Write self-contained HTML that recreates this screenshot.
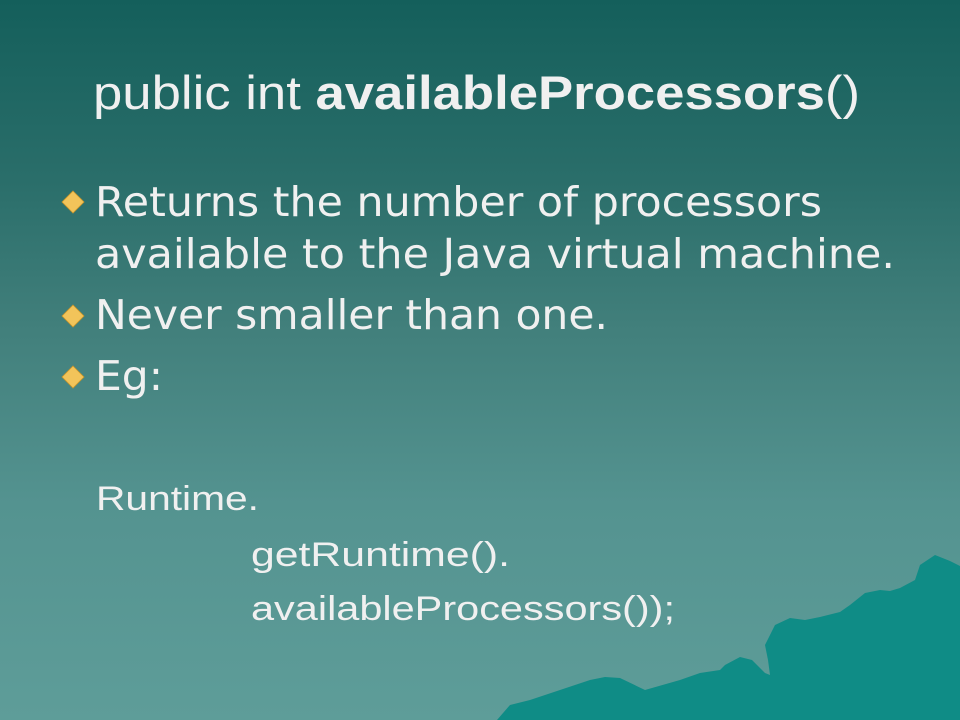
<!DOCTYPE html>
<html><head><meta charset="utf-8"><style>
html,body{margin:0;padding:0;width:960px;height:720px;overflow:hidden}
body{background:linear-gradient(180deg,#145f5b 0%,#2a6e6a 25%,#417f7b 45%,#549390 70%,#5e9d99 100%)}
svg{position:absolute;left:0;top:0}
</style></head><body>
<svg width="960" height="720" viewBox="0 0 960 720">
<polygon fill="#0f8c86" points="497,720 510,705 530,700 590,680 605,677 620,678 645,690 680,680 700,673 720,670 725,665 740,657 752,660 765,673 770,675 768,660 765,645 775,625 790,618 805,620 820,617 840,612 850,605 865,593 880,590 890,591 900,588 915,580 920,565 935,555 950,561 960,566 960,720"/>
<g fill="#f0f0f0">
<text x="93" y="109" font-family="Liberation Sans, sans-serif" font-size="47" textLength="767" lengthAdjust="spacingAndGlyphs">public int <tspan font-weight="bold">availableProcessors</tspan>()</text>
<g font-family="DejaVu Sans, Verdana, sans-serif" font-size="41">
<text x="95" y="216" textLength="727" lengthAdjust="spacingAndGlyphs">Returns the number of processors</text>
<text x="95" y="268" textLength="800" lengthAdjust="spacingAndGlyphs">available to the Java virtual machine.</text>
<text x="95" y="329" textLength="513" lengthAdjust="spacingAndGlyphs">Never smaller than one.</text>
<text x="95" y="390" textLength="68" lengthAdjust="spacingAndGlyphs">Eg:</text>
</g>
<g font-family="Liberation Sans, sans-serif" font-size="34">
<text x="96" y="510" textLength="163" lengthAdjust="spacingAndGlyphs">Runtime.</text>
<text x="251" y="566" textLength="259" lengthAdjust="spacingAndGlyphs">getRuntime().</text>
<text x="251" y="620" textLength="424" lengthAdjust="spacingAndGlyphs">availableProcessors());</text>
</g>
</g>
<g fill="#f2c45a" stroke="#c8952a" stroke-width="0.8">
<polygon points="73,191 84,202 73,213 62,202"/>
<polygon points="73,305 84,316 73,327 62,316"/>
<polygon points="73,366 84,377 73,388 62,377"/>
</g>
</svg>
</body></html>
